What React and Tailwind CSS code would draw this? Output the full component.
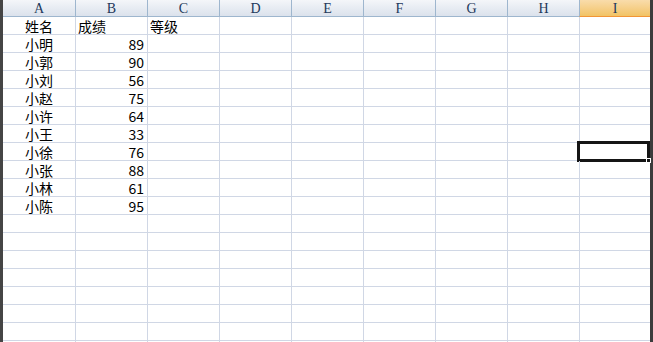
import React from 'react';

const cols = ['A', 'B', 'C', 'D', 'E', 'F', 'G', 'H', 'I'];

const data = [
  ['姓名', '成绩', '等级'],
  ['小明', '89'],
  ['小郭', '90'],
  ['小刘', '56'],
  ['小赵', '75'],
  ['小许', '64'],
  ['小王', '33'],
  ['小徐', '76'],
  ['小张', '88'],
  ['小林', '61'],
  ['小陈', '95'],
];

const ROWS = 19;
const SELECTED_ROW = 7;

const cellFont = { fontFamily: '"Noto Sans CJK SC", "Noto Sans", sans-serif' };

const App = () => {
  const rows = Array.from({ length: ROWS }, (_, i) => data[i] || []);

  return (
    <div className="flex h-[342px] w-[653px] overflow-hidden bg-white">
      <div className="w-[3px] shrink-0 bg-[#454545]" />

      <div className="flex w-[647px] shrink-0 flex-col">
        {/* column headers */}
        <div className="flex h-[17px] shrink-0">
          {cols.map((c, i) => {
            const active = c === 'I';
            return (
              <div
                key={c}
                className={
                  (i === 0 ? 'w-[72px] ' : i === 8 ? 'w-[71px] border-l ' : 'w-[72px] border-l ') +
                  (active
                    ? 'border-[#f29536] border-b border-l-[#9eb6ce] bg-gradient-to-b from-[#f9dcab] to-[#f2c364] '
                    : 'border-[#9eb6ce] border-b bg-gradient-to-b from-[#f4f6f9] to-[#dbe2ec] ') +
                  'flex shrink-0 items-center justify-center pt-[1px] text-[14px] font-normal leading-none text-[#1e395b]'
                }
                style={{ fontFamily: '"Liberation Serif", "DejaVu Serif", serif' }}
              >
                {c}
              </div>
            );
          })}
        </div>

        {/* grid body */}
        {rows.map((r, ri) => (
          <div key={ri} className="flex h-[18px] shrink-0 border-b border-[#d0d7e5]">
            {cols.map((c, ci) => {
              const val = r[ci];
              const isNum = ri > 0 && ci === 1;
              const selected = ri === SELECTED_ROW && c === 'I';
              return (
                <div
                  key={c}
                  className={
                    (ci === 0 ? 'w-[72px] justify-center ' : ci === 8 ? 'w-[71px] border-l ' : 'w-[72px] border-l ') +
                    (isNum ? 'justify-end pr-[3px] ' : ci > 0 ? 'pl-[2px] ' : '') +
                    'relative flex shrink-0 items-center border-[#d0d7e5] text-[14px] leading-[14px] text-black'
                  }
                  style={cellFont}
                >
                  {val}
                  {selected && (
                    <div className="absolute -left-[3px] -top-[2px] -bottom-[2px] right-0 border-[3px] border-[#151515]">
                      <div className="absolute -bottom-[4px] -right-[4px] h-[5px] w-[5px] border border-white bg-[#151515]" />
                    </div>
                  )}
                </div>
              );
            })}
          </div>
        ))}
      </div>

      <div className="w-[3px] shrink-0 bg-[#3c3c3c]" />
    </div>
  );
};

export default App;
